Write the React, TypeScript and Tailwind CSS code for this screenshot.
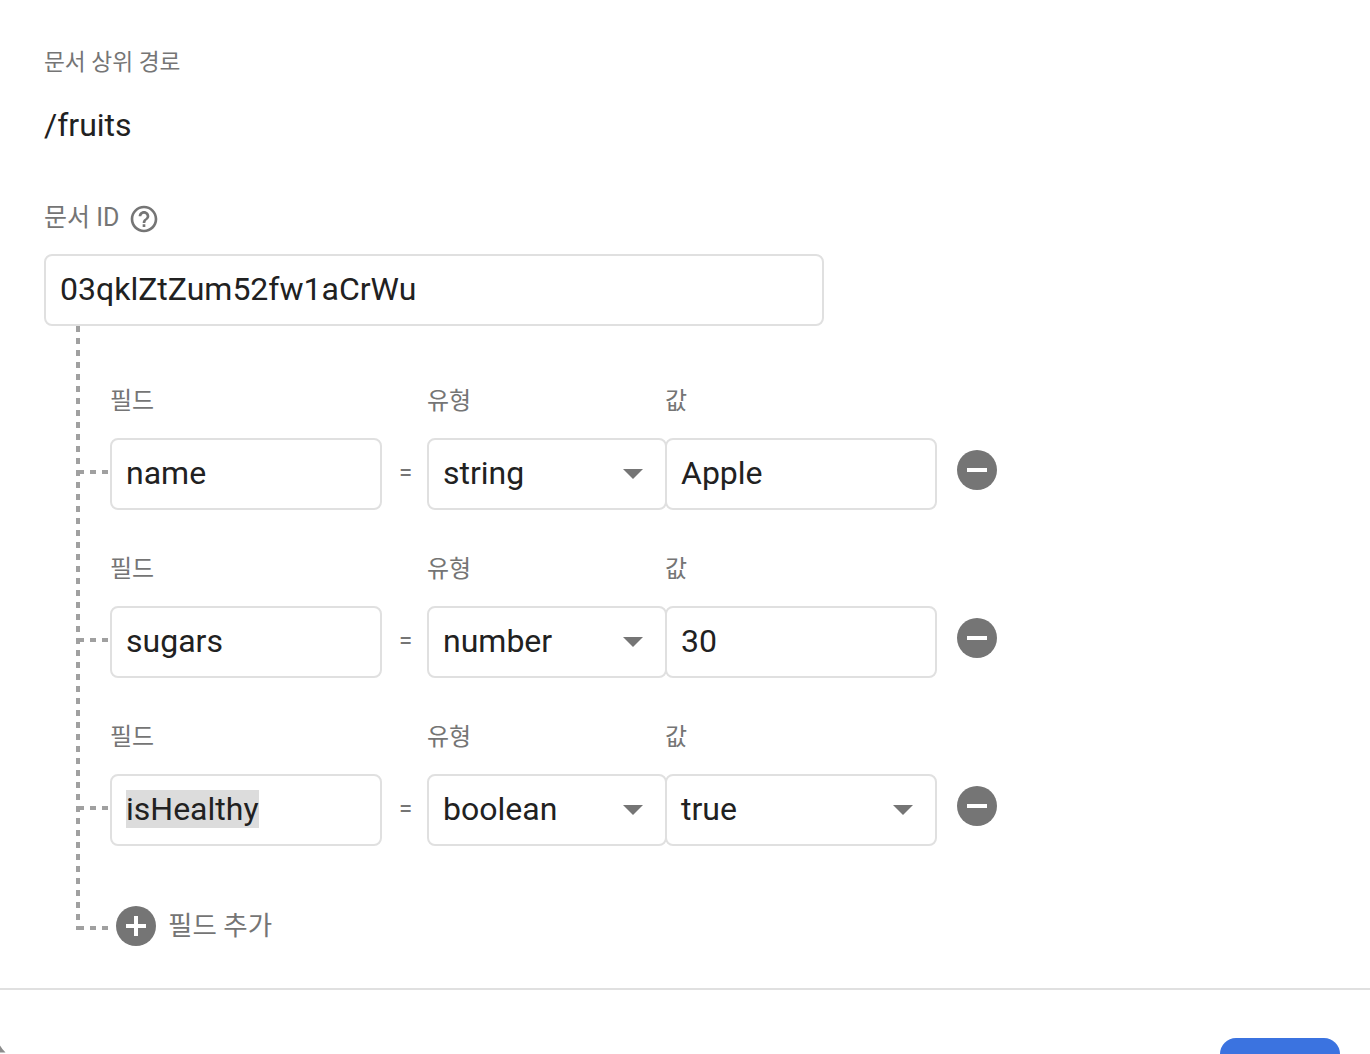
const FONT = "font-['Roboto','Noto_Sans_CJK_KR',sans-serif]";

function Caret() {
  return (
    <svg width="20" height="10" viewBox="0 0 20 10" className="shrink-0">
      <path d="M0 0h20L10 10z" fill="#757575" />
    </svg>
  );
}

function CircleIcon({ plus }: { plus?: boolean }) {
  return (
    <svg width="40" height="40" viewBox="0 0 40 40" className="shrink-0">
      <circle cx="20" cy="20" r="20" fill="#757575" />
      <rect x="10" y="18" width="20" height="4" fill="#fff" />
      {plus && <rect x="18" y="10" width="4" height="20" fill="#fff" />}
    </svg>
  );
}

function HelpIcon() {
  return (
    <svg width="32" height="32" viewBox="0 0 24 24" fill="#757575" className="mt-[2px]">
      <path d="M11 18h2v-2h-2v2zm1-16C6.48 2 2 6.48 2 12s4.48 10 10 10 10-4.48 10-10S17.52 2 12 2zm0 18c-4.41 0-8-3.59-8-8s3.59-8 8-8 8 3.59 8 8-3.59 8-8 8zm0-14c-2.21 0-4 1.79-4 4h2c0-1.1.9-2 2-2s2 .9 2 2c0 2-3 1.75-3 5h2c0-2.25 3-2.5 3-5 0-2.21-1.79-4-4-4z" />
    </svg>
  );
}

function Row({
  name,
  type,
  value,
  select,
  selected,
}: {
  name: string;
  type: string;
  value: string;
  select?: boolean;
  selected?: boolean;
}) {
  return (
    <div className="h-[168px] flex flex-col">
      <div className="flex h-[36px] text-[24px] leading-[38px] text-[#757575]">
        <div className="w-[317px]">필드</div>
        <div className="w-[238px]">유형</div>
        <div>값</div>
      </div>
      <div className="mt-[20px] flex items-start relative">
        <div className="absolute left-[-32px] top-[32px] w-[30px] h-[4px] bg-[repeating-linear-gradient(to_right,#a0a0a0_0,#a0a0a0_6px,transparent_6px,transparent_12px)]" />
        <div className="w-[272px] h-[72px] rounded-[8px] border-2 border-[#e0e0e0] px-[14px] pb-[2px] flex items-center text-[32px] text-[#212121]">
          {selected ? <span className="bg-[#dcdcdc] leading-[38px]">{name}</span> : name}
        </div>
        <div className="w-[45px] h-[72px] pl-[2px] pb-[2px] flex items-center justify-center text-[24px] text-[#757575]">=</div>
        <div className="w-[240px] h-[72px] rounded-[8px] border-2 border-[#e0e0e0] pl-[14px] pr-[22px] flex items-center justify-between text-[32px] text-[#212121] mr-[-2px] bg-white">
          <span className="pb-[2px]">{type}</span>
          <Caret />
        </div>
        <div className="w-[272px] h-[72px] rounded-[8px] border-2 border-[#e0e0e0] pl-[14px] pr-[22px] flex items-center justify-between text-[32px] text-[#212121] relative bg-white">
          <span className="pb-[2px]">{value}</span>
          {select && <Caret />}
        </div>
        <div className="ml-[20px] mt-[12px]">
          <CircleIcon />
        </div>
      </div>
    </div>
  );
}

export default function App() {
  return (
    <div className={`${FONT} w-[1370px] h-[1054px] overflow-hidden bg-white relative flex flex-col`}>
      <div className="h-[988px] shrink-0 pl-[44px] pt-[45px]">
        <div className="text-[22.7px] leading-[36px] text-[#757575]">문서 상위 경로</div>
        <div className="mt-[16px] text-[32px] leading-[56px] text-[#212121]">/fruits</div>
        <div className="mt-[45px] flex items-center gap-[9px] h-[40px] text-[25px] text-[#757575]">
          문서 ID
          <HelpIcon />
        </div>
        <div className="mt-[16px] w-[780px] h-[72px] rounded-[8px] border-2 border-[#e0e0e0] px-[14px] pb-[2px] flex items-center text-[32px] text-[#212121]">
          03qklZtZum52fw1aCrWu
        </div>
        <div className="relative ml-[66px] pt-[56px]">
          <div className="absolute left-[-34px] top-0 w-[4px] h-[604px] bg-[repeating-linear-gradient(to_bottom,#a0a0a0_0,#a0a0a0_6px,transparent_6px,transparent_12px)]" />
          <Row name="name" type="string" value="Apple" />
          <Row name="sugars" type="number" value="30" />
          <Row name="isHealthy" type="boolean" value="true" select selected />
          <div className="relative mt-[20px] flex items-center h-[40px] text-[26.5px] text-[#757575] pl-[6px] gap-[12px]">
            <div className="absolute left-[-32px] top-[20px] w-[30px] h-[4px] bg-[repeating-linear-gradient(to_right,#a0a0a0_0,#a0a0a0_6px,transparent_6px,transparent_12px)]" />
            <CircleIcon plus />
            <span>필드 추가</span>
          </div>
        </div>
      </div>
      <div className="h-[2px] shrink-0 bg-[#e0e0e0]" />
      <div className="flex-1 flex justify-end pt-[48px] pr-[30px]">
        <div className="w-[120px] h-[72px] rounded-[16px] bg-[#3b73e0]" />
      </div>
      <svg width="8" height="10" viewBox="0 0 8 10" className="absolute left-0 bottom-0">
        <path d="M0 1.5Q2 5 5.5 8.5L0 8.5z" fill="#8c8c8c" />
      </svg>
    </div>
  );
}
